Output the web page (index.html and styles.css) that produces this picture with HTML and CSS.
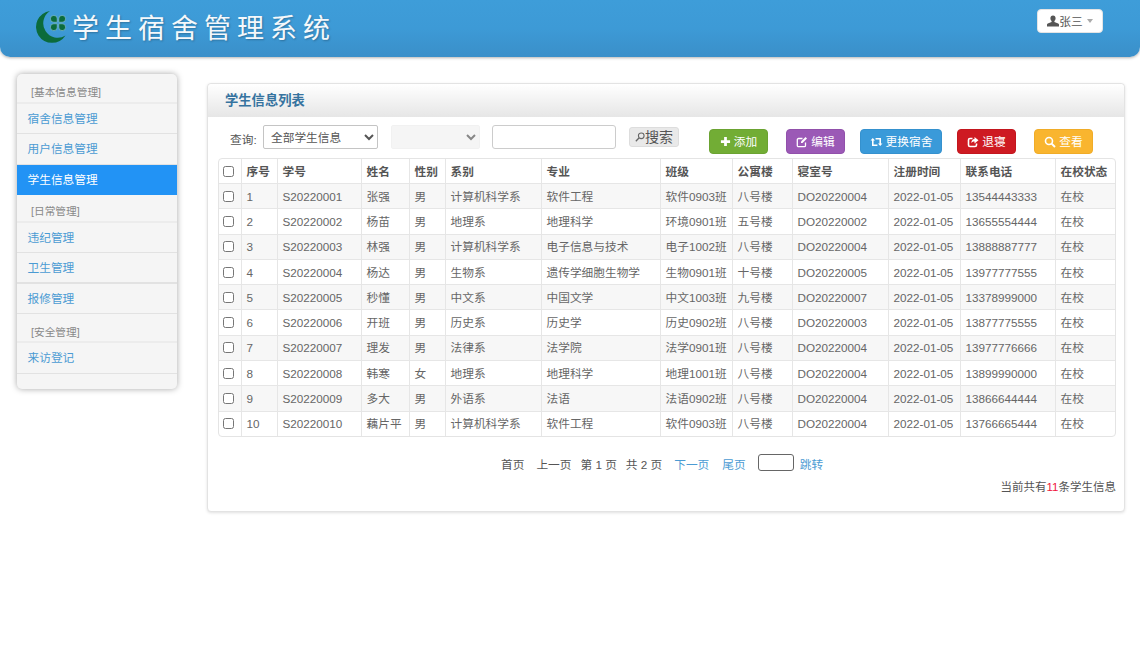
FILE: index.html
```html
<!DOCTYPE html>
<html lang="zh-CN">
<head>
<meta charset="utf-8">
<title>学生宿舍管理系统</title>
<link rel="stylesheet" href="styles.css">
</head>
<body>
<header class="top">
  <div class="brand">
    <svg class="logo" viewBox="0 0 34 34" width="34" height="34" aria-hidden="true">
      <path d="M16 1A16 16 0 1 0 31.500 25.500A13.500 13.500 0 0 1 16 1Z" fill="#0b6b3c"/>
      <g fill="#0b6b3c" stroke="#a9d3e6" stroke-width=".5">
        <path d="M23.200 12.200H19.800A3.400 3.400 0 1 1 23.200 8.800Z"/>
        <path d="M24.800 12.200H28.200A3.400 3.400 0 1 0 24.800 8.800Z"/>
        <path d="M23.200 13.800H19.800A3.400 3.400 0 1 0 23.200 17.200Z"/>
        <path d="M24.800 13.800H28.200A3.400 3.400 0 1 1 24.800 17.200Z"/>
      </g>
    </svg>
    <h1 class="title">学生宿舍管理系统</h1>
  </div>
  <button class="user" type="button">
    <svg viewBox="0 0 12 12" width="12" height="12" aria-hidden="true"><path d="M6 .5C4.300.5 3.400 1.800 3.400 3.300C3.400 4.500 4 5.500 4.600 6.100V7L.8 8.500C.3 8.700 0 9.100 0 9.600V11.500H12V9.600C12 9.100 11.700 8.700 11.200 8.500L7.400 7V6.100C8 5.500 8.600 4.500 8.600 3.300C8.600 1.800 7.700.5 6 .5Z" fill="#555"/></svg><span>张三</span><i class="caret"></i>
  </button>
</header>

<div class="layout">
  <nav class="side">
    <div class="group g1">[基本信息管理]</div>
    <a class="item">宿舍信息管理</a>
    <a class="item">用户信息管理</a>
    <a class="item active">学生信息管理</a>
    <div class="group g2">[日常管理]</div>
    <a class="item">违纪管理</a>
    <a class="item thick">卫生管理</a>
    <a class="item">报修管理</a>
    <div class="group g3">[安全管理]</div>
    <a class="item">来访登记</a>
  </nav>

  <main class="panel">
    <h2 class="panel-head">学生信息列表</h2>
    <div class="panel-body">
      <div class="tools">
        <label class="q">查询:</label>
        <select class="sel sel-main"><option>全部学生信息</option></select>
        <select class="sel sel-off" disabled><option></option></select>
        <input class="kw" type="text">
        <button class="find" type="button"><svg viewBox="0 0 12 12" width="10" height="10" aria-hidden="true"><circle cx="7.500" cy="4.500" r="3.400" fill="none" stroke="#666" stroke-width="1.300"/><path d="M5 7L1 11" stroke="#666" stroke-width="1.600"/></svg>搜索</button>
        <button class="btn b-add" type="button"><svg viewBox="0 0 12 12" width="11" height="11" aria-hidden="true"><path d="M4.500 1H7.500V4.500H11V7.500H7.500V11H4.500V7.500H1V4.500H4.500Z" fill="currentColor"/></svg>添加</button>
        <button class="btn b-edit" type="button"><svg viewBox="0 0 12 12" width="12" height="12" aria-hidden="true"><path d="M9.500 6.500V9.500C9.500 10.300 9 10.700 8.300 10.700H2.500C1.800 10.700 1.300 10.200 1.300 9.500V3.700C1.300 3 1.800 2.500 2.500 2.500H6.500" fill="none" stroke="currentColor" stroke-width="1.300"/><path d="M5 5.500L9.500 1L11 2.500L6.500 7H5Z" fill="currentColor"/></svg>编辑</button>
        <button class="btn b-swap" type="button"><svg viewBox="0 0 14 12" width="13" height="12" aria-hidden="true"><path d="M3 3.500V9.500H8M11 8.500V2.500H6" fill="none" stroke="currentColor" stroke-width="1.700"/><path d="M.6 4.500L3 1.800L5.400 4.500ZM8.600 7.500L11 10.200L13.400 7.500Z" fill="currentColor"/></svg>更换宿舍</button>
        <button class="btn b-out" type="button"><svg viewBox="0 0 12 12" width="12" height="12" aria-hidden="true"><path d="M9.500 7.500V9C9.500 10 9 10.500 8 10.500H3C2 10.500 1.500 10 1.500 9V4C1.500 3 2 2.500 3 2.500H5.500" fill="none" stroke="currentColor" stroke-width="1.600"/><path d="M7.500 1L11.500 4.200L7.500 7.400V5.500C5.800 5.500 4.800 6 4.300 7.300C4.300 4.800 5.500 3 7.500 3Z" fill="currentColor"/></svg>退寝</button>
        <button class="btn b-view" type="button"><svg viewBox="0 0 12 12" width="12" height="12" aria-hidden="true"><circle cx="5" cy="5" r="3.500" fill="none" stroke="currentColor" stroke-width="1.600"/><path d="M7.600 7.600L11 11" stroke="currentColor" stroke-width="2"/></svg>查看</button>
      </div>

      <div class="table-wrap">
        <table class="grid">
          <colgroup>
            <col class="c1"><col class="c2"><col class="c3"><col class="c4"><col class="c5"><col class="c6"><col class="c7"><col class="c8"><col class="c9"><col class="c10"><col class="c11"><col class="c12"><col class="c13">
          </colgroup>
          <thead>
            <tr><th><input type="checkbox"></th><th>序号</th><th>学号</th><th>姓名</th><th>性别</th><th>系别</th><th>专业</th><th>班级</th><th>公寓楼</th><th>寝室号</th><th>注册时间</th><th>联系电话</th><th>在校状态</th></tr>
          </thead>
          <tbody>
            <tr><td><input type="checkbox"></td><td>1</td><td>S20220001</td><td>张强</td><td>男</td><td>计算机科学系</td><td>软件工程</td><td>软件0903班</td><td>八号楼</td><td>DO20220004</td><td>2022-01-05</td><td>13544443333</td><td>在校</td></tr>
            <tr><td><input type="checkbox"></td><td>2</td><td>S20220002</td><td>杨苗</td><td>男</td><td>地理系</td><td>地理科学</td><td>环境0901班</td><td>五号楼</td><td>DO20220002</td><td>2022-01-05</td><td>13655554444</td><td>在校</td></tr>
            <tr><td><input type="checkbox"></td><td>3</td><td>S20220003</td><td>林强</td><td>男</td><td>计算机科学系</td><td>电子信息与技术</td><td>电子1002班</td><td>八号楼</td><td>DO20220004</td><td>2022-01-05</td><td>13888887777</td><td>在校</td></tr>
            <tr><td><input type="checkbox"></td><td>4</td><td>S20220004</td><td>杨达</td><td>男</td><td>生物系</td><td>遗传学细胞生物学</td><td>生物0901班</td><td>十号楼</td><td>DO20220005</td><td>2022-01-05</td><td>13977777555</td><td>在校</td></tr>
            <tr><td><input type="checkbox"></td><td>5</td><td>S20220005</td><td>秒懂</td><td>男</td><td>中文系</td><td>中国文学</td><td>中文1003班</td><td>九号楼</td><td>DO20220007</td><td>2022-01-05</td><td>13378999000</td><td>在校</td></tr>
            <tr><td><input type="checkbox"></td><td>6</td><td>S20220006</td><td>开班</td><td>男</td><td>历史系</td><td>历史学</td><td>历史0902班</td><td>八号楼</td><td>DO20220003</td><td>2022-01-05</td><td>13877775555</td><td>在校</td></tr>
            <tr><td><input type="checkbox"></td><td>7</td><td>S20220007</td><td>理发</td><td>男</td><td>法律系</td><td>法学院</td><td>法学0901班</td><td>八号楼</td><td>DO20220004</td><td>2022-01-05</td><td>13977776666</td><td>在校</td></tr>
            <tr><td><input type="checkbox"></td><td>8</td><td>S20220008</td><td>韩寒</td><td>女</td><td>地理系</td><td>地理科学</td><td>地理1001班</td><td>八号楼</td><td>DO20220004</td><td>2022-01-05</td><td>13899990000</td><td>在校</td></tr>
            <tr><td><input type="checkbox"></td><td>9</td><td>S20220009</td><td>多大</td><td>男</td><td>外语系</td><td>法语</td><td>法语0902班</td><td>八号楼</td><td>DO20220004</td><td>2022-01-05</td><td>13866644444</td><td>在校</td></tr>
            <tr><td><input type="checkbox"></td><td>10</td><td>S20220010</td><td>藕片平</td><td>男</td><td>计算机科学系</td><td>软件工程</td><td>软件0903班</td><td>八号楼</td><td>DO20220004</td><td>2022-01-05</td><td>13766665444</td><td>在校</td></tr>
          </tbody>
        </table>
      </div>

      <div class="pager">
        <span>首页</span>
        <span class="m12">上一页</span>
        <span class="m9">第 1 页</span>
        <span class="m9">共 2 页</span>
        <a class="m12">下一页</a>
        <a class="m13">尾页</a>
        <input class="jump" type="text">
        <a class="m6">跳转</a>
      </div>
      <p class="total">当前共有<b>11</b>条学生信息</p>
    </div>
  </main>
</div>
</body>
</html>
```

FILE: styles.css
```css
* { box-sizing: border-box; }
html, body { margin: 0; padding: 0; background: #fff; }
body {
  width: 1140px;
  height: 650px;
  overflow: hidden;
  font: 11.700px/17px "Liberation Sans", "Noto Sans CJK SC", sans-serif;
  color: #555;
}

.top {
  height: 57px;
  display: flex;
  justify-content: space-between;
  align-items: flex-start;
  padding: 9px 37px 0 34px;
  border-radius: 0 0 10px 10px;
  background: linear-gradient(#3e9dd9 0%, #3d9ad6 50%, #3a8fc9 100%);
  box-shadow: 0 1px 3px rgba(0, 0, 0, .3);
}
.brand { display: flex; align-items: center; height: 36px; }
.logo { display: block; }
.title {
  margin: -1px 0 0 4px;
  font: 400 27px/34px "Noto Sans CJK SC", sans-serif;
  letter-spacing: 6px;
  color: #f4f8fb;
  text-shadow: 1px 1px 2px rgba(0, 0, 0, .25);
  white-space: nowrap;
}
.user {
  width: 66px;
  height: 24px;
  padding: 0;
  display: flex;
  align-items: center;
  justify-content: center;
  background: #fff;
  border: 1px solid #e4e4e4;
  border-radius: 4px;
  font: inherit;
  color: #555;
}
.caret {
  margin-left: 4px;
  border: 3px solid transparent;
  border-top: 4px solid #aaa;
  border-bottom: 0;
}

.layout { display: flex; align-items: flex-start; padding: 17px 0 0 17px; }

.side {
  width: 160px;
  height: 315px;
  background: #f5f5f5;
  border-radius: 5px;
  box-shadow: 0 0 6px rgba(0, 0, 0, .35);
  display: flex;
  flex-direction: column;
}
.group {
  padding: 10px 0 0 14px;
  color: #888;
  font-size: 10.700px;
  border-bottom: 2px solid #ececec;
}
.g1 { height: 29.500px; }
.g2 { height: 27.500px; padding-top: 8px; }
.g3 { height: 29px; padding-top: 10px; }
.item {
  height: 30.500px;
  line-height: 30px;
  padding-left: 10.500px;
  color: #4b9bd3;
  border-bottom: 1px solid #e2e2e2;
}
.item.thick { border-bottom-width: 2px; }
.item.active {
  background: #2293f5;
  color: #fff;
  border-bottom-color: #2293f5;
}

.panel {
  width: 918px;
  height: 429px;
  margin: 9px 0 0 30px;
  background: #fff;
  border: 1px solid #e3e3e3;
  border-radius: 4px;
  box-shadow: 0 1px 3px rgba(0, 0, 0, .12);
}
.panel-head {
  margin: 0;
  height: 33px;
  padding: 0 0 0 17px;
  font-size: 13.300px;
  font-weight: bold;
  line-height: 33px;
  color: #36739f;
  background: linear-gradient(#fff, #e6e6e6);
  border-radius: 4px 4px 0 0;
}
.panel-body { padding: 8px 9px 0 10px; }

.tools { display: flex; align-items: flex-start; height: 33px; }
.q { margin: 6px 0 0 12px; width: 33px; color: #555; }
.sel {
  height: 24px;
  font: inherit;
  color: #555;
  border: 1px solid #c4c4c4;
  border-radius: 2px;
  background-color: #fff;
}
.sel-main { width: 115px; padding-left: 3px; }
.sel-off {
  width: 89px;
  margin-left: 13px;
  border-color: #ececec;
  background-color: #f2f2f2;
}
.kw {
  width: 124px;
  height: 24px;
  margin-left: 12px;
  border: 1px solid #ccc;
  border-radius: 3px;
}
.find {
  width: 50px;
  height: 20px;
  margin: 2px 0 0 13px;
  padding: 0;
  display: flex;
  align-items: center;
  justify-content: center;
  background: #e9e9e9;
  border: 1px solid #ddd;
  border-radius: 3px;
  font: 14px/18px "Liberation Sans", "Noto Sans CJK SC", sans-serif;
  color: #555;
}
.btn {
  height: 25px;
  margin-top: 4px;
  padding: 0;
  display: flex;
  align-items: center;
  justify-content: center;
  gap: 3px;
  color: #fff;
  font: inherit;
  border: 1px solid transparent;
  border-radius: 4px;
}
.b-add { width: 59px; margin-left: 30px; background: #72ad35; border-color: #6ba332; }
.b-edit { width: 59px; margin-left: 18px; background: #9b59b6; border-color: #9150ab; }
.b-swap { width: 82px; margin-left: 15px; background: #3a9ad9; border-color: #3591ce; }
.b-out { width: 59px; margin-left: 15px; background: #ce1a22; border-color: #c3161e; }
.b-view { width: 59px; margin-left: 18px; background: #f9b52f; border-color: #f0ac28; }

.table-wrap {
  width: 898px;
  height: 279px;
  border: 1px solid #e4e4e4;
  border-radius: 4px;
  overflow: hidden;
}
.grid {
  width: 898px;
  height: 278px;
  table-layout: fixed;
  border-collapse: collapse;
  margin: -1px 0 0 -1px;
}
.c1 { width: 23px; } .c2 { width: 36px; } .c3 { width: 84px; } .c4 { width: 48px; }
.c5 { width: 36px; } .c6 { width: 96px; } .c7 { width: 119px; } .c8 { width: 72px; }
.c9 { width: 60px; } .c10 { width: 96px; } .c11 { width: 72px; } .c12 { width: 95px; } .c13 { width: 61px; }
.grid th, .grid td {
  padding: 0 0 0 4.500px;
  border: 1px solid #e6e6e6;
  text-align: left;
  white-space: nowrap;
  overflow: hidden;
  color: #666;
}
.grid th { height: 25px; color: #555; font-weight: bold; }
.grid td { height: 25.300px; }
.grid th:first-child, .grid td:first-child { padding-left: 4px; }
.grid tbody tr:nth-child(odd) td { background: #f7f7f7; }
.grid input { display: block; margin: 0; width: 11px; height: 11px; }

.pager { display: flex; align-items: center; height: 18px; margin-top: 18px; padding-left: 283px; }
.pager a { color: #4b9bd3; }
.m12 { margin-left: 12px; }
.m13 { margin-left: 13px; }
.m9 { margin-left: 9px; }
.m6 { margin-left: 6px; }
.jump {
  width: 36px;
  height: 17px;
  margin: -3px 0 0 12px;
  border: 1px solid #666;
  border-radius: 3px;
}
.total { margin: 6px 0 0; width: 898px; text-align: right; font-size: 11.500px; line-height: 17px; }
.total b { color: #f0143c; font-weight: normal; }
```
